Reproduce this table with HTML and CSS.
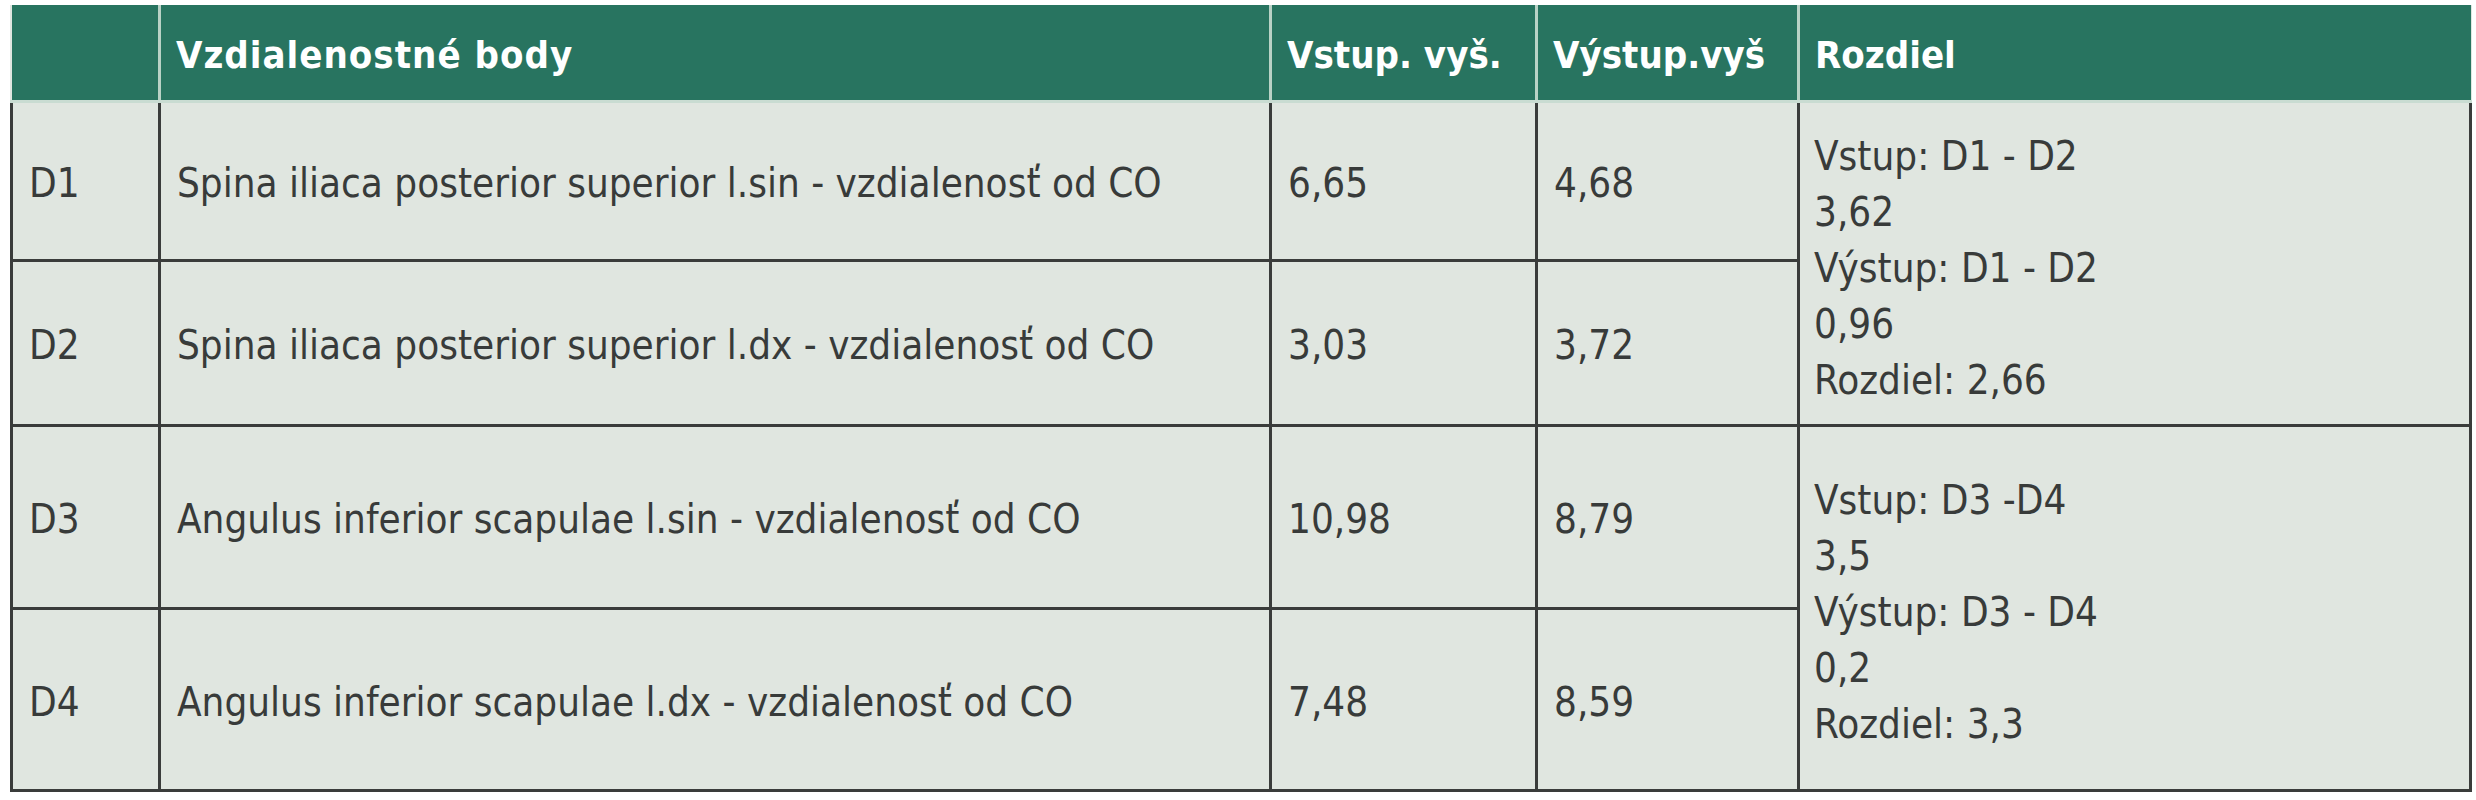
FILE: index.html
```html
<!DOCTYPE html>
<html lang="sk">
<head>
<meta charset="utf-8">
<title>Vzdialenostné body</title>
<link rel="stylesheet" href="styles.css">
</head>
<body>
<table class="data">
  <colgroup>
    <col class="c-id">
    <col class="c-name">
    <col class="c-in">
    <col class="c-out">
    <col class="c-diff">
  </colgroup>
  <thead>
    <tr class="head">
      <th></th>
      <th><span class="wide">Vzdialenostné body</span></th>
      <th>Vstup. vyš.</th>
      <th>Výstup.vyš</th>
      <th>Rozdiel</th>
    </tr>
  </thead>
  <tbody>
    <tr class="r1">
      <td>D1</td>
      <td>Spina iliaca posterior superior l.sin - vzdialenosť od CO</td>
      <td>6,65</td>
      <td class="soft">4,68</td>
      <td rowspan="2" class="diff">Vstup: D1 - D2<br>3,62<br>Výstup: D1 - D2<br>0,96<br>Rozdiel: 2,66</td>
    </tr>
    <tr class="r2">
      <td>D2</td>
      <td>Spina iliaca posterior superior l.dx - vzdialenosť od CO</td>
      <td>3,03</td>
      <td class="soft">3,72</td>
    </tr>
    <tr class="r3">
      <td>D3</td>
      <td>Angulus inferior scapulae l.sin - vzdialenosť od CO</td>
      <td>10,98</td>
      <td class="soft">8,79</td>
      <td rowspan="2" class="diff">Vstup: D3 -D4<br>3,5<br>Výstup: D3 - D4<br>0,2<br>Rozdiel: 3,3</td>
    </tr>
    <tr class="r4">
      <td>D4</td>
      <td>Angulus inferior scapulae l.dx - vzdialenosť od CO</td>
      <td>7,48</td>
      <td class="soft">8,59</td>
    </tr>
  </tbody>
</table>
</body>
</html>
```
FILE: styles.css
```css
html, body {
  background: #ffffff;
}
body {
  margin: 0;
  padding: 5px 7px 0 10px;
  font-family: "Liberation Sans Narrow", "DejaVu Sans Condensed", "Liberation Sans", sans-serif;
}
.data {
  width: 2459px;
  border-collapse: collapse;
  table-layout: fixed;
  background: #e0e6e0;
  color: #383b3a;
}
.c-id { width: 148px; }
.c-name { width: 1111px; }
.c-in { width: 266px; }
.c-out { width: 262px; }
.c-diff { width: 672px; }

.head th {
  height: 91px;
  background: #287460;
  color: #ffffff;
  font-weight: bold;
  font-size: 38px;
  text-align: left;
  padding: 4px 0 0 15px;
  border-left: 3px solid #b9d2c6;
  border-bottom: 3px solid #c9dcd2;
}
.head th:first-child { border-left: none; }
.head .wide { letter-spacing: 1px; }

.data td {
  font-size: 40px;
  font-weight: normal;
  padding: 4px 0 0 16px;
  vertical-align: middle;
  border: 3px solid #3a3c3b;
  line-height: 1.1;
}
.data td.soft { border-left-color: #6f7873; }
.data td.diff {
  line-height: 56px;
  padding: 8px 0 0 14px;
}
.r1 td { height: 152px; }
.r2 td { height: 158px; }
.r3 td { height: 176px; }
.r4 td { height: 175px; }
```
